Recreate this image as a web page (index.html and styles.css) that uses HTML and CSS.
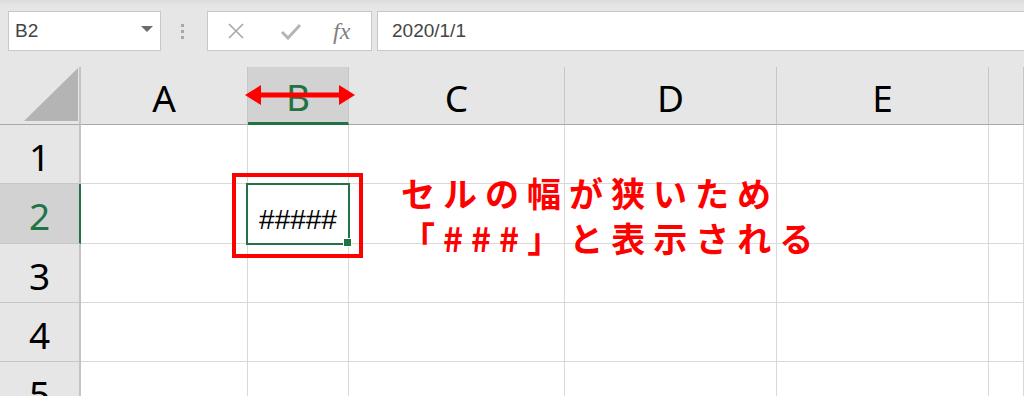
FILE: index.html
```html
<!DOCTYPE html>
<html lang="ja">

<head>
    <meta charset="UTF-8">
    <meta name="viewport" content="width=device-width, initial-scale=1.0">
    <title>セルの幅</title>

    <link rel="stylesheet" href="styles.css">
</head>

<body>

    <div class="toolbar">
        <div class="namebox">
            <span>B2</span>
            <svg class="namebox--arrow" width="12" height="7" viewBox="0 0 12 7"><path d="M0 0 H12 L6 6 Z" fill="#6b6b6b"/></svg>
        </div>
        <div class="grip"><i></i><i></i><i></i></div>
        <div class="fbuttons">
            <svg class="fbuttons--cancel" width="18" height="18" viewBox="0 0 18 18"><path d="M2 2 L16 16 M16 2 L2 16" stroke="#a8a8a8" stroke-width="1.6" fill="none"/></svg>
            <svg class="fbuttons--enter" width="22" height="18" viewBox="0 0 22 18"><path d="M2 10 L8 16 L20 3" stroke="#b5b5b5" stroke-width="3" fill="none"/></svg>
            <span class="fx">fx</span>
        </div>
        <div class="formula">2020/1/1</div>
    </div>

    <div class="sheet">
        <div class="head corner"><svg width="54" height="53" viewBox="0 0 54 53"><path d="M54 0 V53 H0 Z" fill="#b4b4b4"/></svg></div>
        <div class="head col">A</div>
        <div class="head col selected-col">B</div>
        <div class="head col">C</div>
        <div class="head col">D</div>
        <div class="head col">E</div>
        <div class="head col"></div>

        <div class="head row">1</div>
        <div class="cell"></div><div class="cell"></div><div class="cell"></div><div class="cell"></div><div class="cell"></div><div class="cell"></div>

        <div class="head row selected-row">2</div>
        <div class="cell"></div><div class="cell value">#####</div><div class="cell"></div><div class="cell"></div><div class="cell"></div><div class="cell"></div>

        <div class="head row">3</div>
        <div class="cell"></div><div class="cell"></div><div class="cell"></div><div class="cell"></div><div class="cell"></div><div class="cell"></div>

        <div class="head row">4</div>
        <div class="cell"></div><div class="cell"></div><div class="cell"></div><div class="cell"></div><div class="cell"></div><div class="cell"></div>

        <div class="head row">5</div>
        <div class="cell"></div><div class="cell"></div><div class="cell"></div><div class="cell"></div><div class="cell"></div><div class="cell"></div>

        <!-- selection + annotations -->
        <div class="selection"><span class="handle"></span></div>
        <div class="mark"></div>
        <svg class="width-arrow" width="110" height="24" viewBox="0 0 110 24">
            <path d="M0 12 L16 2 V9.5 H94 V2 L110 12 L94 22 V14.5 H16 V22 Z" fill="#ff0000"/>
        </svg>
        <p class="note">セルの幅が狭いため<br>「###」と表示される</p>
    </div>

</body>

</html>
```

FILE: styles.css
```css
/* Variables */
:root {
    --color-green: #217346;
    --color-bg: #e6e6e6;
    --color-line: #d9d9d9;
    --color-head-line: #c6c6c6;
    --color-red: #ff0000;
}

/* Base */
body {
    margin: 0;
    background-color: #ffffff;
    font-family: "Noto Sans", "Noto Sans CJK JP", sans-serif;
    overflow: hidden;
}

/* Toolbar */
.toolbar {
    display: flex;
    align-items: flex-start;
    height: 67px;
    box-sizing: border-box;
    padding: 11px 0 0 8px;
    background: linear-gradient(#dcdcdc 0, var(--color-bg) 6px);
}

.namebox {
    display: flex;
    align-items: center;
    justify-content: space-between;
    width: 153px;
    height: 40px;
    box-sizing: border-box;
    padding: 0 7px 0 6px;
    background-color: #ffffff;
    border: 1px solid #c8c8c8;
    font-family: "Liberation Sans", sans-serif;
    font-size: 19px;
    color: #444444;
}

.namebox--arrow {
    margin-top: -4px;
}

.grip {
    display: flex;
    flex-direction: column;
    gap: 3px;
    margin: 13px 0 0 20px;
}

.grip i {
    display: block;
    width: 3px;
    height: 3px;
    background-color: #a8a8a8;
}

.fbuttons {
    display: flex;
    align-items: center;
    width: 165px;
    height: 40px;
    box-sizing: border-box;
    margin-left: 23px;
    padding-left: 19px;
    background-color: #ffffff;
    border: 1px solid #c8c8c8;
}

.fbuttons--enter {
    margin-left: 35px;
}

.fx {
    margin-left: 31px;
    font-family: "Liberation Serif", serif;
    font-style: italic;
    font-size: 24px;
    color: #7f7f7f;
}

.formula {
    flex: 1;
    height: 40px;
    box-sizing: border-box;
    margin-left: 5px;
    padding-left: 14px;
    line-height: 38px;
    background-color: #ffffff;
    border: 1px solid #c8c8c8;
    border-right: none;
    font-family: "Liberation Sans", sans-serif;
    font-size: 19px;
    color: #444444;
}

/* Sheet */
.sheet {
    position: relative;
    display: grid;
    grid-template-columns: 81px 167px 101px 216px 212px 212px 1fr;
    grid-template-rows: 58px 59px 60px 59px 59px 59px;
}

.head {
    display: flex;
    align-items: center;
    justify-content: center;
    box-sizing: border-box;
    background-color: var(--color-bg);
    font-size: 37px;
    color: #000000;
    padding-top: 4px;
}

.col {
    border-right: 1px solid var(--color-head-line);
    border-bottom: 1px solid #a9a9a9;
}

.corner {
    justify-content: flex-end;
    align-items: flex-end;
    padding: 0 1px 3px 0;
    border-right: 2px solid #c4c4c4;
    border-bottom: 1px solid #a9a9a9;
}

.row {
    border-right: 2px solid #c4c4c4;
    border-bottom: 1px solid var(--color-head-line);
}

.selected-col {
    background-color: #d2d2d2;
    color: var(--color-green);
    border-bottom: 3px solid var(--color-green);
}

.selected-row {
    background-color: #d2d2d2;
    color: var(--color-green);
    border-right: 2px solid var(--color-green);
}

.cell {
    box-sizing: border-box;
    border-right: 1px solid var(--color-line);
    border-bottom: 1px solid var(--color-line);
}

.value {
    display: flex;
    align-items: flex-end;
    justify-content: center;
    padding-bottom: 9px;
    font-family: "Liberation Sans", sans-serif;
    font-size: 28px;
    line-height: 1;
}

/* Selection and notes */
.selection {
    position: absolute;
    left: 246px;
    top: 116px;
    width: 104px;
    height: 62px;
    box-sizing: border-box;
    border: 2px solid var(--color-green);
}

.handle {
    position: absolute;
    right: -4px;
    bottom: -4px;
    width: 7px;
    height: 7px;
    background-color: var(--color-green);
    border: 1px solid #ffffff;
}

.mark {
    position: absolute;
    left: 232px;
    top: 106px;
    width: 131px;
    height: 85px;
    box-sizing: border-box;
    border: 4px solid var(--color-red);
}

.width-arrow {
    position: absolute;
    left: 245px;
    top: 16px;
}

.note {
    position: absolute;
    left: 401px;
    top: 103px;
    margin: 0;
    font-family: "Noto Sans CJK JP", sans-serif;
    font-weight: 700;
    font-size: 34px;
    line-height: 45px;
    letter-spacing: 8px;
    color: var(--color-red);
}
```
